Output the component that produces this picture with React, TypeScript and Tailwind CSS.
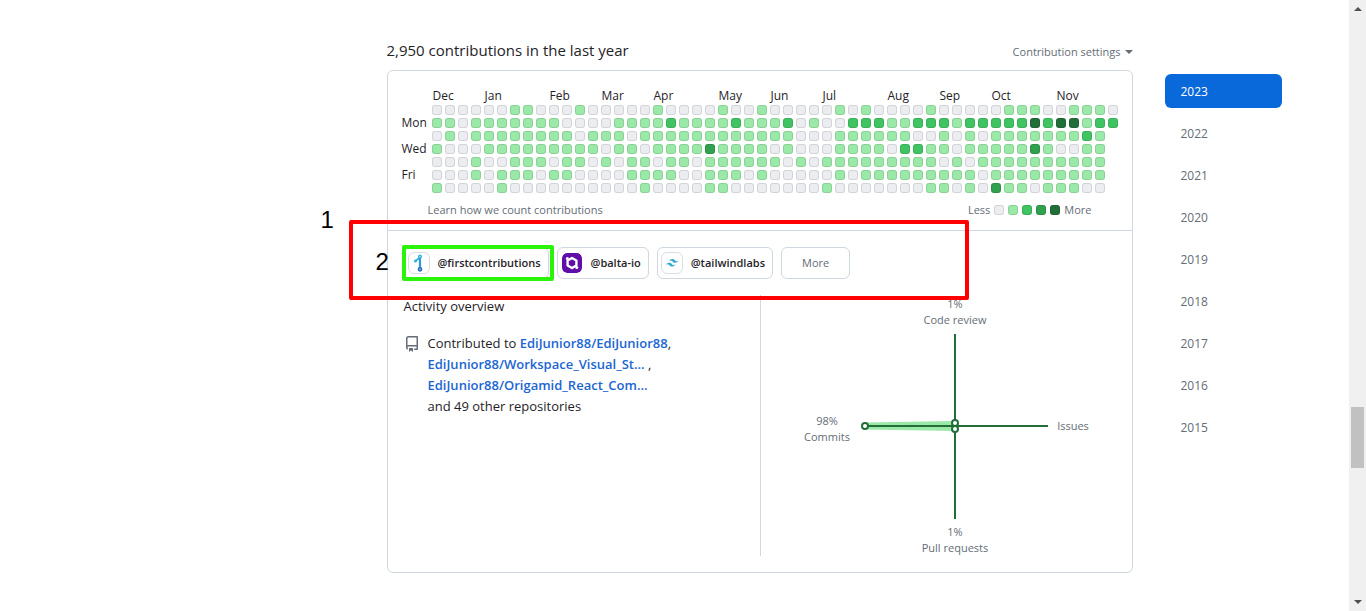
import React from "react";

const levels = [
  "00000011000100000100001001000001010000100000111001110",
  "11011111110000111121111211120100222112221222224244122",
  "0101111111101110111111111111000111111001010111111121",
  "1000111111111011011113111101000111102211011111310011",
  "0001001110110101101101111110101111111110101111111111",
  "0001011101100001111001110100000101111111110111111111",
  "1000010000000000100001100000001000000011010311011100",
];

const tones = ["bg-[#ebedf0]", "bg-[#9be9a8]", "bg-[#40c463]", "bg-[#30a14e]", "bg-[#216e39]"];

const months = [
  { name: "Dec", span: 4 },
  { name: "Jan", span: 5 },
  { name: "Feb", span: 4 },
  { name: "Mar", span: 4 },
  { name: "Apr", span: 5 },
  { name: "May", span: 4 },
  { name: "Jun", span: 4 },
  { name: "Jul", span: 5 },
  { name: "Aug", span: 4 },
  { name: "Sep", span: 4 },
  { name: "Oct", span: 5 },
  { name: "Nov", span: 5 },
];

const days = ["", "Mon", "", "Wed", "", "Fri", ""];
const years = [2023, 2022, 2021, 2020, 2019, 2018, 2017, 2016, 2015];

function Cell({ level }: { level: number }) {
  return <span className={`block size-[10px] rounded-[3px] border border-black/10 ${tones[level]}`} />;
}

function Calendar() {
  return (
    <table className="table-fixed border-separate border-spacing-[3px]">
      <colgroup>
        <col className="w-[28px]" />
        {Array.from({ length: 53 }, (_, i) => (
          <col key={i} className="w-[10px]" />
        ))}
      </colgroup>
      <thead>
        <tr className="h-[13px]">
          <td className="p-0" />
          {months.map((m) => (
            <th key={m.name} colSpan={m.span} scope="colgroup" className="p-0 text-left align-middle font-normal">
              <div className="h-[13px] overflow-visible pl-px text-[12px] leading-[14px] whitespace-nowrap">{m.name}</div>
            </th>
          ))}
        </tr>
      </thead>
      <tbody>
        {levels.map((row, r) => (
          <tr key={r} className="h-[10px]">
            <th scope="row" className="p-0 text-left font-normal">
              <div className="flex h-[10px] items-center pl-px text-[12px] leading-[10px]">{days[r]}</div>
            </th>
            {row.split("").map((v, c) => (
              <td key={c} className="p-0">
                <Cell level={Number(v)} />
              </td>
            ))}
          </tr>
        ))}
      </tbody>
    </table>
  );
}

function FirstLogo() {
  return (
    <svg viewBox="0 0 20 20" className="size-5" fill="none" stroke="#2c9bd6" strokeWidth="2.2">
      <path d="M6.500 8 11 4.500" stroke="#35b4e4" />
      <path d="M11 5v10" />
      <circle cx="11" cy="3.500" r="1.400" fill="#bfe6f6" stroke="#35b4e4" strokeWidth="1.400" />
      <circle cx="6.400" cy="8" r="1.500" fill="#35b4e4" stroke="none" />
      <circle cx="11" cy="16.300" r="1.600" fill="#a9cdec" stroke="#2470bd" strokeWidth="1.600" />
    </svg>
  );
}

function BaltaLogo() {
  return (
    <svg viewBox="0 0 20 20" className="size-5" fill="none">
      <rect width="20" height="20" rx="5" fill="#5f0fa8" />
      <path d="M10 5 14.400 7.500v5L10 15l-4.400-2.500v-5z" stroke="#fff" strokeWidth="2.400" strokeLinejoin="round" />
      <circle cx="5.400" cy="5.400" r="1.500" fill="#fff" />
      <circle cx="14.800" cy="14.600" r="1.500" fill="#fff" />
    </svg>
  );
}

function TailwindLogo() {
  return (
    <svg viewBox="0 0 20 20" className="size-5" fill="#38a9cf">
      <path
        transform="translate(2.800 2.400) scale(.62)"
        d="M12 6c-2.67 0-4.33 1.33-5 4 1-1.33 2.17-1.83 3.5-1.5.76.19 1.31.74 1.91 1.35.98 1 2.09 2.15 4.59 2.15 2.67 0 4.33-1.33 5-4-1 1.33-2.17 1.83-3.5 1.5-.76-.19-1.3-.74-1.91-1.35C15.61 7.15 14.5 6 12 6m-5 6c-2.67 0-4.33 1.33-5 4 1-1.33 2.17-1.83 3.5-1.5.76.19 1.3.74 1.91 1.35C8.39 16.85 9.5 18 12 18c2.67 0 4.33-1.33 5-4-1 1.33-2.17 1.83-3.5 1.5-.76-.19-1.3-.74-1.91-1.35C10.61 13.15 9.5 12 7 12"
      />
    </svg>
  );
}

function Chip({ logo, name, framed = true }: { logo: React.ReactNode; name: string; framed?: boolean }) {
  return (
    <a href="#" className="flex h-8 items-center gap-2 rounded-md border border-[#d0d7de] pr-[7px] pl-[3px] text-[11px] font-semibold">
      <span
        className={`flex size-[22px] items-center justify-center overflow-hidden rounded-md border ${
          framed ? "border-[#d8dee4]" : "border-transparent"
        }`}
      >
        {logo}
      </span>
      {name}
    </a>
  );
}

function Radar() {
  return (
    <svg viewBox="0 0 331 261" className="w-[331px] max-w-full" fontSize="11" fill="#656d76" textAnchor="middle">
      <path d="M80 130.500 170 129v4L80 131.500z" fill="#9be9a8" stroke="#9be9a8" strokeWidth="6" strokeLinejoin="round" />
      <path d="M80 131H263M170 39V224" stroke="#216e39" strokeWidth="2" />
      <g fill="#fff" stroke="#216e39" strokeWidth="2">
        <circle cx="80" cy="131" r="3" />
        <circle cx="170" cy="128" r="3" />
        <circle cx="170" cy="134" r="3" />
      </g>
      <text x="170" y="13">1%</text>
      <text x="170" y="29">Code review</text>
      <text x="42" y="130">98%</text>
      <text x="42" y="146">Commits</text>
      <text x="288" y="135">Issues</text>
      <text x="170" y="241">1%</text>
      <text x="170" y="257">Pull requests</text>
    </svg>
  );
}

export default function App() {
  return (
    <div className="flex h-screen overflow-hidden bg-white font-['Open_Sans','Noto_Sans',sans-serif] text-[#1f2328]">
      <div className="min-w-0 flex-1">
        <main className="mx-auto flex max-w-[1280px] pt-10 pr-[33px] pl-[352px]">
          <section className="min-w-0 flex-1">
            <div className="flex h-[30px] items-start justify-between">
              <h2 className="text-[15px] leading-5">2,950 contributions in the last year</h2>
              <button className="flex items-center gap-1 text-[11px] leading-6 text-[#656d76]">
                Contribution settings
                <span className="border-x-4 border-t-4 border-x-transparent border-t-[#656d76]" />
              </button>
            </div>

            <div className="relative rounded-md border border-[#d0d7de]">
              <div className="h-[160px] border-b border-[#d0d7de] pt-[15px] pl-[10px]">
                <Calendar />
                <div className="mt-[6px] flex items-center justify-between pr-10 pl-[30px] text-[11px] leading-4 text-[#656d76]">
                  <a href="#">Learn how we count contributions</a>
                  <div className="flex items-center gap-1">
                    <span>Less</span>
                    {[0, 1, 2, 3, 4].map((l) => (
                      <Cell key={l} level={l} />
                    ))}
                    <span>More</span>
                  </div>
                </div>
              </div>

              <div className="px-4 pt-4 pb-4">
                <nav className="flex gap-2">
                  <Chip logo={<FirstLogo />} name="@firstcontributions" />
                  <Chip logo={<BaltaLogo />} name="@balta-io" framed={false} />
                  <Chip logo={<TailwindLogo />} name="@tailwindlabs" />
                  <button className="h-8 rounded-md border border-[#d0d7de] px-5 text-[11px] text-[#656d76]">More</button>
                </nav>

                <div className="mt-4 grid grid-cols-2">
                  <div>
                    <h3 className="text-[13px] leading-[22px]">Activity overview</h3>
                    <div className="mt-4 flex gap-2 text-[13px] leading-[21px]">
                      <svg viewBox="0 0 16 16" className="mt-[3px] size-4 shrink-0" fill="#656d76">
                        <path d="M2 2.5A2.5 2.5 0 0 1 4.500 0h8.750a.75.75 0 0 1 .75.75v12.500a.75.75 0 0 1-.75.75h-2.500a.75.75 0 0 1 0-1.500h1.750v-2h-8a1 1 0 0 0-.714 1.700.75.75 0 1 1-1.072 1.050A2.495 2.495 0 0 1 2 11.500Zm10.500-1h-8a1 1 0 0 0-1 1v6.708A2.486 2.486 0 0 1 4.500 9h8ZM5 12.250a.25.25 0 0 1 .25-.25h3.500a.25.25 0 0 1 .25.25v3.250a.25.25 0 0 1-.4.200l-1.450-1.087a.249.249 0 0 0-.3 0L5.400 15.700a.25.25 0 0 1-.4-.2Z" />
                      </svg>
                      <p>
                        Contributed to <a href="#" className="font-semibold text-[#1b66d2]">EdiJunior88/EdiJunior88</a>,
                        <br />
                        <a href="#" className="font-semibold text-[#1b66d2]">EdiJunior88/Workspace_Visual_St…</a> ,
                        <br />
                        <a href="#" className="font-semibold text-[#1b66d2]">EdiJunior88/Origamid_React_Com…</a>
                        <br />
                        and 49 other repositories
                      </p>
                    </div>
                  </div>
                  <div className="border-l border-[#d0d7de] pl-6">
                    <Radar />
                  </div>
                </div>
              </div>

              <div className="pointer-events-none absolute top-[149px] -left-[39px] h-20 w-[620px] rounded-[2px] border-4 border-[#fe0000]" />
              <div className="pointer-events-none absolute top-[174px] left-[14px] h-9 w-[152px] rounded-[2px] border-4 border-[#2bf40a]" />
              <span className="absolute top-[137px] -left-[67px] font-['Liberation_Sans',sans-serif] text-[24px] leading-6 text-black">1</span>
              <span className="absolute top-[179px] -left-3 font-['Liberation_Sans',sans-serif] text-[24px] leading-6 text-black">2</span>
            </div>
          </section>

          <nav className="mt-[34px] ml-8 flex w-[117px] shrink-0 flex-col gap-2 text-[12px] text-[#656d76]">
            {years.map((y) => (
              <a
                key={y}
                href="#"
                className={
                  y === 2023
                    ? "rounded-md bg-[#0969da] px-4 pt-[9px] pb-[7px] leading-[18px] text-white"
                    : "rounded-md px-4 pt-[9px] pb-[7px] leading-[18px]"
                }
              >
                {y}
              </a>
            ))}
          </nav>
        </main>
      </div>

      <div aria-hidden="true" className="flex w-[17px] shrink-0 flex-col items-center bg-[#f0f0f0] py-[7px]">
        <span className="border-x-4 border-b-4 border-x-transparent border-b-[#505050]" />
        <span className="grow-[396]" />
        <span className="h-[61px] w-[13px] bg-[#c1c1c1]" />
        <span className="grow-[132]" />
        <span className="border-x-4 border-t-4 border-x-transparent border-t-[#505050]" />
      </div>
    </div>
  );
}
